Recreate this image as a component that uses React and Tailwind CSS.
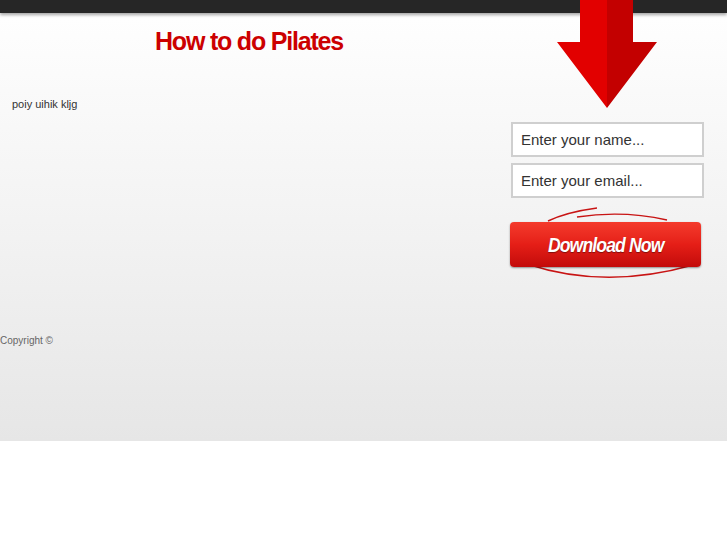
export default function App() {
  return (
    <div className="w-full min-h-[545px] bg-white" style={{ fontFamily: '"Liberation Sans", Arial, sans-serif' }}>
      <div className="relative h-[441px] bg-gradient-to-b from-white via-[#f3f3f3] to-[#e6e6e6]">
        <div className="h-[13px] bg-[#262626] shadow-[0_2px_3px_rgba(0,0,0,0.35)]" />

        <svg className="absolute left-[557px] top-0" width="101" height="110" viewBox="0 0 101 110">
          <polygon points="23,0 50,0 50,42 50,108 0,42 23,42" fill="#e20000" />
          <polygon points="50,0 76,0 76,42 100,42 50,108" fill="#c30000" />
        </svg>

        <div className="w-[505px]">
          <h1 className="pl-[155px] pt-[13px] text-[25px] font-bold leading-[30px] tracking-[-1.2px] text-[#cc0000]">
            How to do Pilates
          </h1>
          <p className="pl-[12px] pt-[40px] text-[11px] text-[#333]">poiy uihik kljg</p>
        </div>

        <div className="absolute left-[511px] top-[122px] flex w-[193px] flex-col gap-[6px]">
          <input
            className="h-[35px] w-full border-2 border-[#cfcfcf] bg-white px-[8px] text-[15px] text-[#333] placeholder:text-[#333] outline-none"
            placeholder="Enter your name..."
          />
          <input
            className="h-[35px] w-full border-2 border-[#cfcfcf] bg-white px-[8px] text-[15px] text-[#333] placeholder:text-[#333] outline-none"
            placeholder="Enter your email..."
          />
          <div className="relative mt-[18px] h-[56px] w-[193px]">
            <svg className="absolute left-[-6px] top-[-20px]" width="205" height="82" viewBox="0 0 205 82">
              <path d="M43 19 Q62 10 92 6" fill="none" stroke="#c81414" strokeWidth="1.4" />
              <path d="M72 15 Q118 8 162 18" fill="none" stroke="#c81414" strokeWidth="1.4" />
              <path d="M22 62 Q100 88 188 63" fill="none" stroke="#c81414" strokeWidth="1.6" />
            </svg>
            <button className="absolute left-[-1px] top-[0px] flex h-[45px] w-[191px] items-center justify-center rounded-[4px] bg-gradient-to-b from-[#f43a2c] via-[#e51e17] to-[#c30a0a] shadow-[0_1px_2px_rgba(0,0,0,0.4)]">
              <span className="text-[20px] font-bold italic tracking-[-1px] text-white [text-shadow:0_1px_1px_rgba(0,0,0,0.4)]" style={{ transform: "scaleX(0.88)" }}>
                Download Now
              </span>
            </button>
          </div>
        </div>

        <p className="pt-[220px] text-[10px] text-[#666]">Copyright ©</p>
      </div>
    </div>
  );
}
